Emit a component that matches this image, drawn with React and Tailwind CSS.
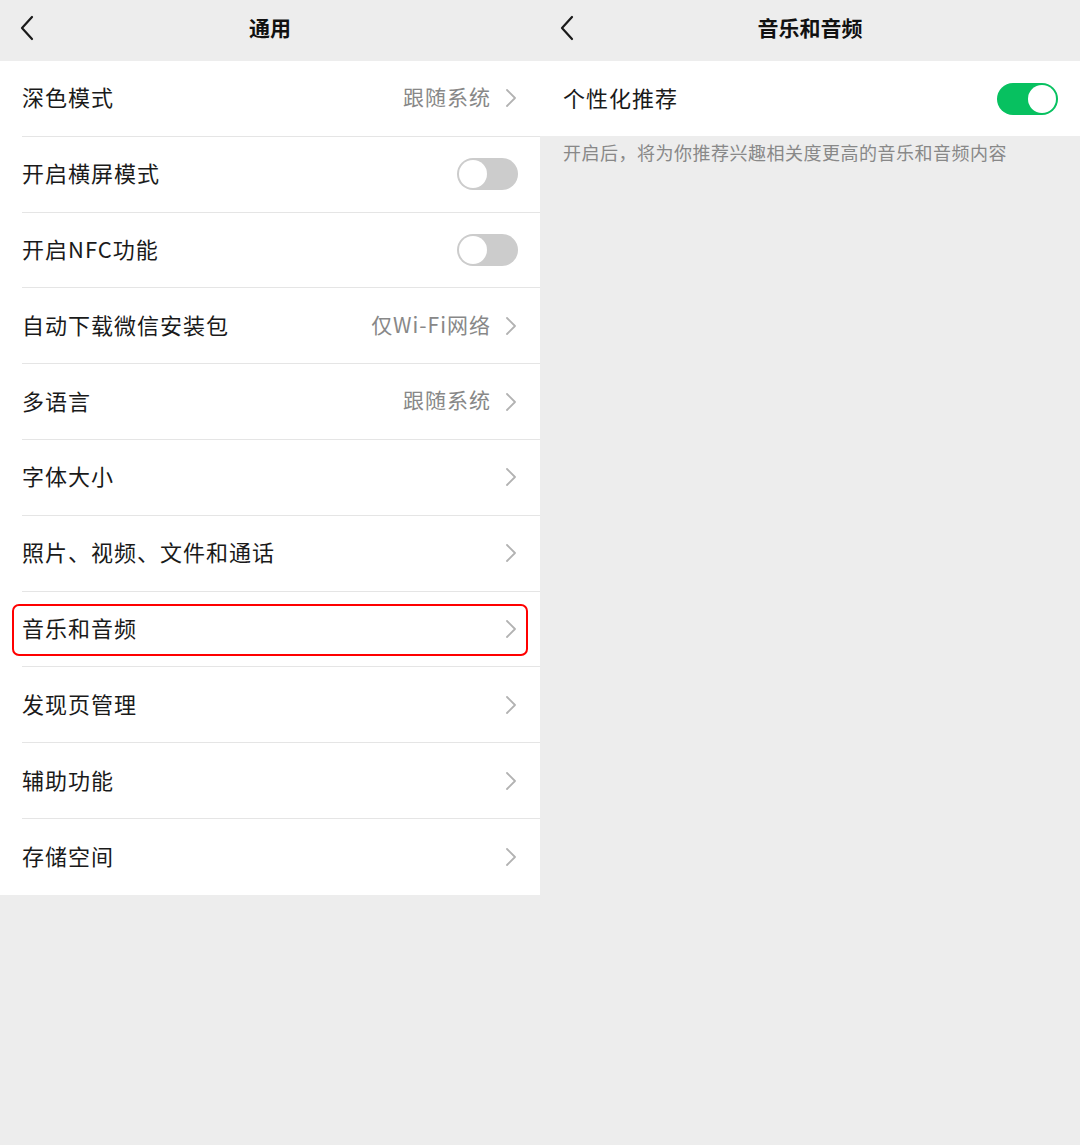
import React from 'react';

const font = { fontFamily: '"Noto Sans CJK SC", "Noto Sans", sans-serif' };

const BackIcon = () => (
  <svg width="16" height="26" viewBox="0 0 16 26" fill="none">
    <path d="M13 2 L3 13 L13 24" stroke="#1a1a1a" strokeWidth="2.2" strokeLinecap="round" strokeLinejoin="round" />
  </svg>
);

const Chevron = () => (
  <svg width="12" height="20" viewBox="0 0 12 20" fill="none">
    <path d="M2 2 L10 10 L2 18" stroke="#b2b2b2" strokeWidth="1.8" strokeLinecap="round" strokeLinejoin="round" />
  </svg>
);

const Toggle = ({ on }) => (
  <div className={`w-[61px] h-[32px] rounded-full p-[2px] flex ${on ? 'bg-[#07c160] justify-end' : 'bg-[#cccccc] justify-start'}`}>
    <div className="w-[28px] h-[28px] rounded-full bg-white" />
  </div>
);

const Header = ({ title }) => (
  <div className="h-[61px] flex items-center relative bg-[#ededed]">
    <div className="absolute left-[19px] top-[15px]">
      <BackIcon />
    </div>
    <div className="flex-1 text-center text-[21px] font-bold text-[#111] pb-[6px]">{title}</div>
  </div>
);

const rows = [
  { label: '深色模式', value: '跟随系统' },
  { label: '开启横屏模式', toggle: true },
  { label: '开启NFC功能', toggle: true },
  { label: '自动下载微信安装包', value: '仅Wi-Fi网络' },
  { label: '多语言', value: '跟随系统' },
  { label: '字体大小' },
  { label: '照片、视频、文件和通话' },
  { label: '音乐和音频', highlight: true },
  { label: '发现页管理' },
  { label: '辅助功能' },
  { label: '存储空间' },
];

const Row = ({ row, last }) => (
  <div className="pl-[22px] relative">
    <div className={`h-[75.8px] flex items-center ${row.toggle ? 'pr-[22px]' : 'pr-[23px]'} ${last ? '' : 'border-b border-[#e5e5e5]'}`}>
      <span className="flex-1 text-[22px] text-[#1a1a1a] tracking-[1px] pb-[3px]">{row.label}</span>
      {row.toggle ? (
        <Toggle on={false} />
      ) : (
        <div className="flex items-center gap-[14px]">
          {row.value && <span className="text-[21px] text-[#888] tracking-[1px] pb-[3px]">{row.value}</span>}
          <Chevron />
        </div>
      )}
    </div>
    {row.highlight && (
      <div className="absolute left-[12px] right-[12px] top-[12px] h-[52px] border-[2.5px] border-[#ff0000] rounded-[7px]" />
    )}
  </div>
);

export default function App() {
  return (
    <div className="w-[1080px] h-[1145px] bg-[#ededed] flex" style={font}>
      <div className="w-[540px] flex flex-col">
        <Header title="通用" />
        <div className="bg-white">
          {rows.map((r, i) => (
            <Row key={r.label} row={r} last={i === rows.length - 1} />
          ))}
        </div>
      </div>
      <div className="w-[540px] flex flex-col">
        <Header title="音乐和音频" />
        <div className="bg-white h-[75px] flex items-center pl-[23px] pr-[22px]">
          <span className="flex-1 text-[22px] text-[#1a1a1a] tracking-[1px] pb-[3px]">个性化推荐</span>
          <Toggle on={true} />
        </div>
        <div className="pl-[23px] pt-[3px] text-[18px] text-[#888] tracking-[0.5px]">
          开启后，将为你推荐兴趣相关度更高的音乐和音频内容
        </div>
      </div>
    </div>
  );
}
